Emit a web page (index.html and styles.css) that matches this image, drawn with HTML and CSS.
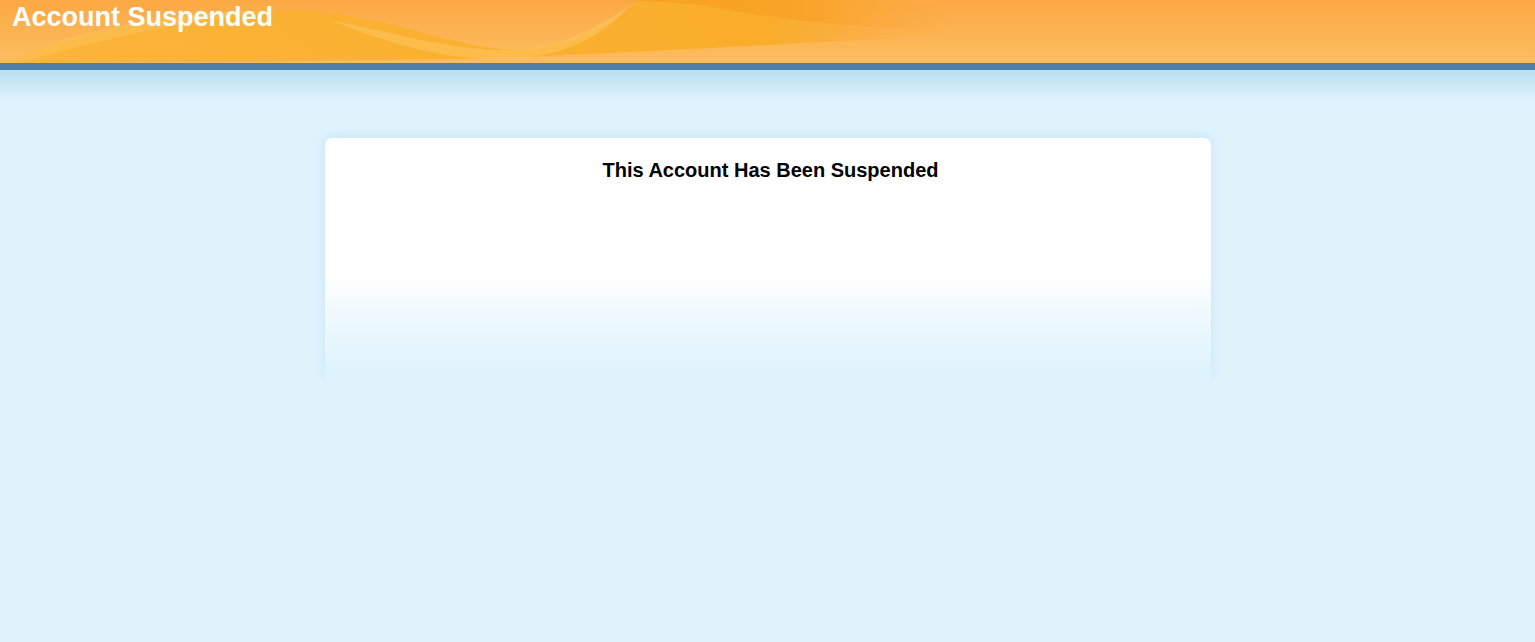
FILE: index.html
```html
<!DOCTYPE html>
<html lang="en">
<head>
    <meta charset="UTF-8">
    <meta name="viewport" content="width=device-width, initial-scale=1.0">
    <title>Account Suspended</title>
    <link rel="stylesheet" href="styles.css">
</head>
<body>
    <header>
        <svg class="waves" viewBox="0 0 1535 63" preserveAspectRatio="none">
            <defs>
                <linearGradient id="bg" x1="0" y1="0" x2="0" y2="1">
                    <stop offset="0" stop-color="#fba945"/>
                    <stop offset="1" stop-color="#fdbd5e"/>
                </linearGradient>
                <linearGradient id="band" gradientUnits="userSpaceOnUse" x1="0" y1="0" x2="960" y2="0">
                    <stop offset="0" stop-color="#fbb537" stop-opacity="0.9"/>
                    <stop offset="0.8" stop-color="#f9ad2a" stop-opacity="1"/>
                    <stop offset="1" stop-color="#fba945" stop-opacity="0"/>
                </linearGradient>
                <linearGradient id="dark" gradientUnits="userSpaceOnUse" x1="560" y1="0" x2="960" y2="0">
                    <stop offset="0" stop-color="#f8a01e" stop-opacity="0.9"/>
                    <stop offset="0.6" stop-color="#f9a225" stop-opacity="0.8"/>
                    <stop offset="1" stop-color="#fba945" stop-opacity="0"/>
                </linearGradient>
            </defs>
            <rect width="1535" height="63" fill="url(#bg)"/>
            <!-- main yellow swoosh -->
            <path d="M0 63 C90 25 200 8 290 10 C370 12 430 38 490 48 C560 58 610 25 640 0 L960 0 L960 36 C800 42 650 52 500 58 C300 62 150 62 0 63 Z" fill="url(#band)"/>
            <!-- darker top band -->
            <path d="M600 0 L960 0 L960 30 C880 30 790 22 720 8 C690 3 650 0 600 0 Z" fill="url(#dark)"/>
            <!-- light valley -->
            <path d="M330 20 C390 32 440 48 500 50 C560 52 600 25 630 5 C600 40 560 58 500 59 C440 60 380 40 330 20 Z" fill="#fdc65e" opacity="0.55"/>
            <!-- light ridge top-left -->
            <path d="M0 63 C80 28 180 10 280 10 C200 18 100 38 20 63 Z" fill="#fdc868" opacity="0.4"/>
            <path d="M0 0 L300 0 C250 4 210 8 180 8 C120 10 60 8 0 14 Z" fill="#fba945" opacity="0.35"/>
        </svg>
        <h1>Account Suspended</h1>
    </header>
    <div class="stripe"></div>
    <div class="haze"></div>

    <main class="container">
        <div class="card">
            <h2>This Account Has Been Suspended</h2>
        </div>
    </main>
</body>
</html>
```

FILE: styles.css
```css
body {
    font-family: "Liberation Sans", Arial, sans-serif;
    margin: 0;
    padding: 0;
    background-color: #dff3fd;
    color: #000;
}

header {
    position: relative;
    height: 63px;
    overflow: hidden;
}

header .waves {
    position: absolute;
    left: 0;
    top: 0;
    width: 100%;
    height: 100%;
}

header h1 {
    position: relative;
    margin: 0;
    padding: 1px 12px 0;
    font-size: 27px;
    line-height: 32px;
    color: #fff;
    font-weight: bold;
}

.stripe {
    height: 7px;
    background: #4f7fa8;
}

.haze {
    height: 30px;
    background: linear-gradient(to bottom, #b7def0, #dff3fd);
}

.container {
    width: 886px;
    margin: 38px auto 0;
}

.card {
    height: 242px;
    border-radius: 7px 7px 0 0;
    background: linear-gradient(to bottom, #fff 0, #fff 140px, #eaf7fd 190px, #dff3fd 235px);
    box-shadow: 0 -2px 10px rgba(170, 215, 240, 0.45);
    padding-top: 20px;
    box-sizing: border-box;
}

.card h2 {
    margin: 0;
    padding-left: 6px;
    text-align: center;
    font-size: 20px;
    line-height: 24px;
    font-weight: bold;
}
```
